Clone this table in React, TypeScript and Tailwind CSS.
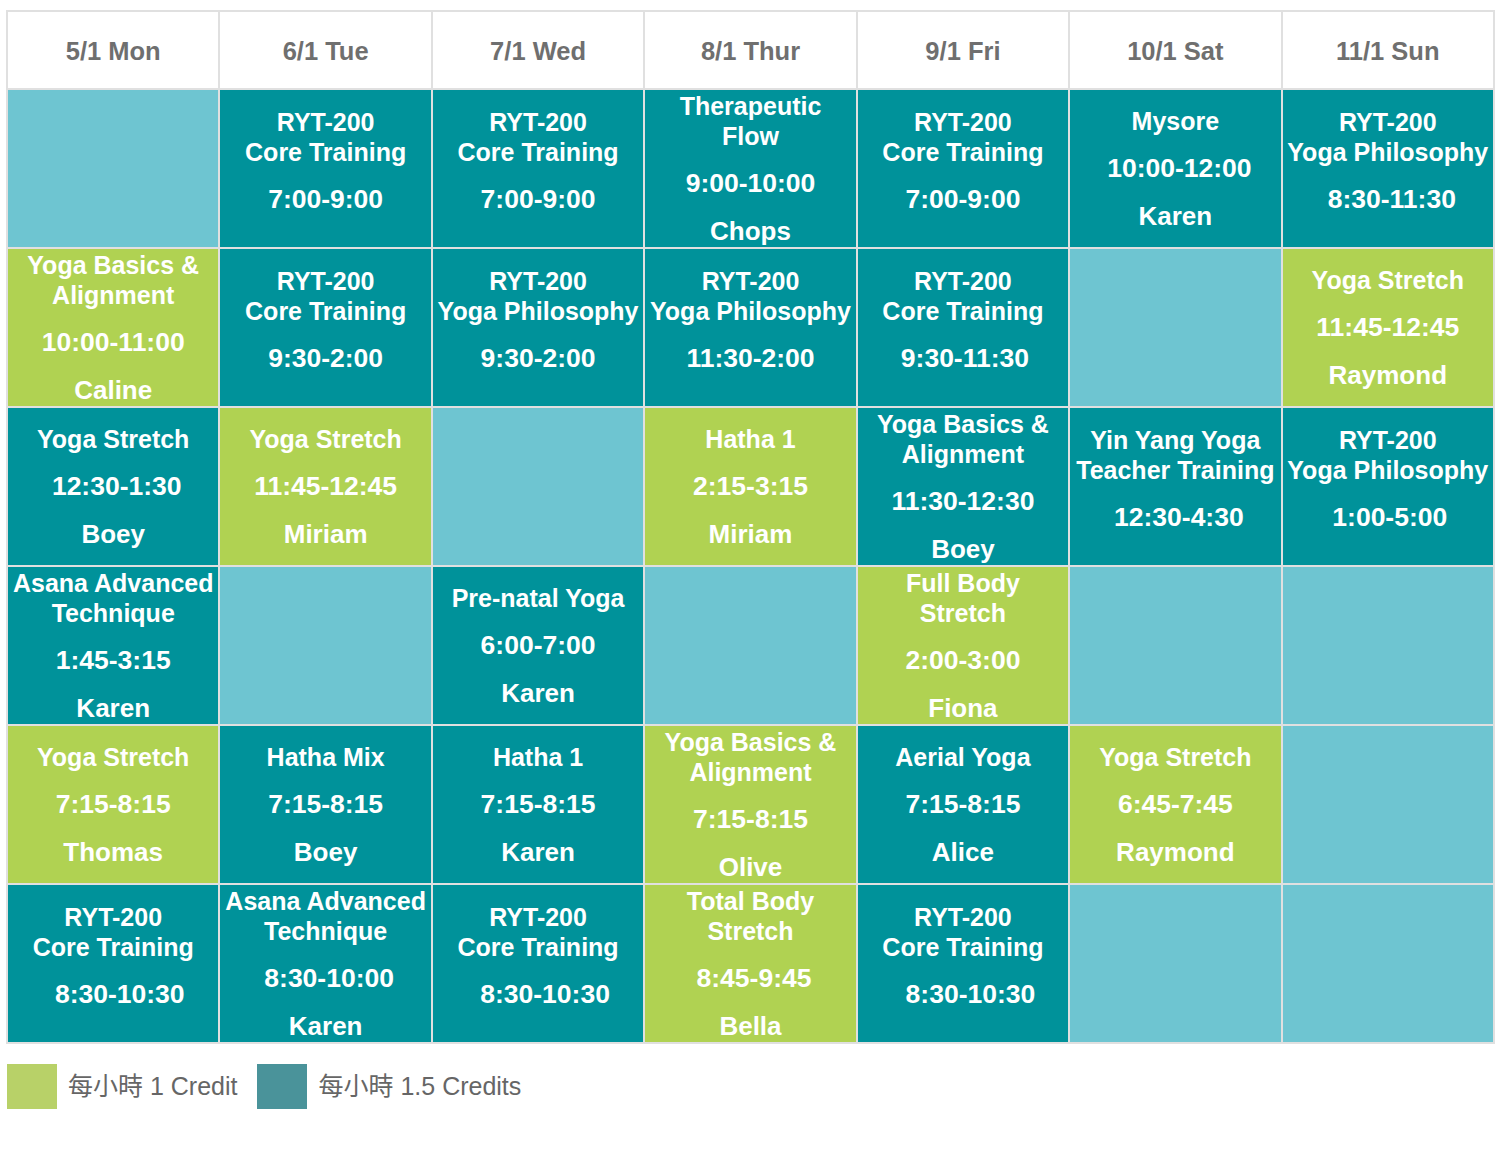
import React from 'react';

type Kind = 'teal' | 'green' | 'light';

type Slot = {
    kind: Kind;
    title?: string[];
    time?: string;
    who?: string;
    // small nudge for the time line, the source has stray spaces in some cells
    nudge?: string;
};

const days = ['5/1 Mon', '6/1 Tue', '7/1 Wed', '8/1 Thur', '9/1 Fri', '10/1 Sat', '11/1 Sun'];

const E: Slot = { kind: 'light' };
const ryt = (second: string, time: string, nudge?: string): Slot => ({ kind: 'teal', title: ['RYT-200', second], time, nudge });

const rows: Slot[][] = [
    [
        E,
        ryt('Core Training', '7:00-9:00'),
        ryt('Core Training', '7:00-9:00'),
        { kind: 'teal', title: ['Therapeutic', 'Flow'], time: '9:00-10:00', who: 'Chops' },
        ryt('Core Training', '7:00-9:00'),
        { kind: 'teal', title: ['Mysore'], time: '10:00-12:00', who: 'Karen', nudge: 'pl-[8px]' },
        ryt('Yoga Philosophy', '8:30-11:30', 'pl-[8px]'),
    ],
    [
        { kind: 'green', title: ['Yoga Basics &', 'Alignment'], time: '10:00-11:00', who: 'Caline' },
        ryt('Core Training', '9:30-2:00'),
        ryt('Yoga Philosophy', '9:30-2:00'),
        ryt('Yoga Philosophy', '11:30-2:00'),
        ryt('Core Training', '9:30-11:30', 'pl-[4px]'),
        E,
        { kind: 'green', title: ['Yoga Stretch'], time: '11:45-12:45', who: 'Raymond' },
    ],
    [
        { kind: 'teal', title: ['Yoga Stretch'], time: '12:30-1:30', who: 'Boey', nudge: 'pl-[7px]' },
        { kind: 'green', title: ['Yoga Stretch'], time: '11:45-12:45', who: 'Miriam' },
        E,
        { kind: 'green', title: ['Hatha 1'], time: '2:15-3:15', who: 'Miriam' },
        { kind: 'teal', title: ['Yoga Basics &', 'Alignment'], time: '11:30-12:30', who: 'Boey' },
        { kind: 'teal', title: ['Yin Yang Yoga', 'Teacher Training'], time: '12:30-4:30', nudge: 'pl-[7px]' },
        ryt('Yoga Philosophy', '1:00-5:00', 'pl-[4px]'),
    ],
    [
        { kind: 'teal', title: ['Asana Advanced', 'Technique'], time: '1:45-3:15', who: 'Karen' },
        E,
        { kind: 'teal', title: ['Pre-natal Yoga'], time: '6:00-7:00', who: 'Karen' },
        E,
        { kind: 'green', title: ['Full Body', 'Stretch'], time: '2:00-3:00', who: 'Fiona' },
        E,
        E,
    ],
    [
        { kind: 'green', title: ['Yoga Stretch'], time: '7:15-8:15', who: 'Thomas' },
        { kind: 'teal', title: ['Hatha Mix'], time: '7:15-8:15', who: 'Boey' },
        { kind: 'teal', title: ['Hatha 1'], time: '7:15-8:15', who: 'Karen' },
        { kind: 'green', title: ['Yoga Basics &', 'Alignment'], time: '7:15-8:15', who: 'Olive' },
        { kind: 'teal', title: ['Aerial Yoga'], time: '7:15-8:15', who: 'Alice' },
        { kind: 'green', title: ['Yoga Stretch'], time: '6:45-7:45', who: 'Raymond' },
        E,
    ],
    [
        ryt('Core Training', '8:30-10:30', 'pl-[13px]'),
        { kind: 'teal', title: ['Asana Advanced', 'Technique'], time: '8:30-10:00', who: 'Karen', nudge: 'pl-[7px]' },
        ryt('Core Training', '8:30-10:30', 'pl-[14px]'),
        { kind: 'green', title: ['Total Body', 'Stretch'], time: '8:45-9:45', who: 'Bella', nudge: 'pl-[7px]' },
        ryt('Core Training', '8:30-10:30', 'pl-[15px]'),
        E,
        E,
    ],
];

const bg: Record<Kind, string> = {
    teal: 'bg-[#00929a]',
    green: 'bg-[#b0d252]',
    light: 'bg-[#6ec5d1]',
};

function Cell({ slot }: { slot: Slot }) {
    return (
        <div className={`${bg[slot.kind]} flex flex-col items-center justify-center overflow-hidden whitespace-nowrap text-white font-bold text-center`}>
            {slot.title && (
                <div className="text-[25px] leading-[30px]">
                    {slot.title.map((t) => (
                        <div key={t}>{t}</div>
                    ))}
                </div>
            )}
            {slot.time && (
                <div className={`mt-[17px] text-[26.5px] leading-[30px] ${slot.nudge ?? ''}`}>{slot.time}</div>
            )}
            {slot.who ? (
                <div className="mt-[18px] text-[26px] leading-[30px]">{slot.who}</div>
            ) : (
                slot.title && <div className="h-[17px]" />
            )}
        </div>
    );
}

export default function App() {
    return (
        <div className="min-h-screen bg-white font-['Liberation_Sans',Arial,sans-serif]">
            <div className="pl-[6px] pt-[10px]">
                <div className="grid w-[1489px] grid-cols-7 grid-rows-[76px_repeat(6,157px)] gap-[2px] bg-[#e0e0e0] p-[2px]">
                    {days.map((d) => (
                        <div key={d} className="flex items-center justify-center bg-white pt-[3px] text-[25.5px] font-bold text-[#6f6f6f]">
                            {d}
                        </div>
                    ))}
                    {rows.map((row, r) =>
                        row.map((slot, c) => <Cell key={`${r}-${c}`} slot={slot} />)
                    )}
                </div>

                {/* Legend */}
                <div className="mt-[20px] flex items-center pl-[1px] text-[25px] text-[#666] font-['Liberation_Sans','Noto_Sans_CJK_TC',sans-serif]">
                    <div className="h-[45px] w-[50px] bg-[#b8d168]" />
                    <span className="ml-[11px]">每小時 1 Credit</span>
                    <div className="ml-[20px] h-[45px] w-[50px] bg-[#4a939a]" />
                    <span className="ml-[11px]">每小時 1.5 Credits</span>
                </div>
            </div>
        </div>
    );
}
